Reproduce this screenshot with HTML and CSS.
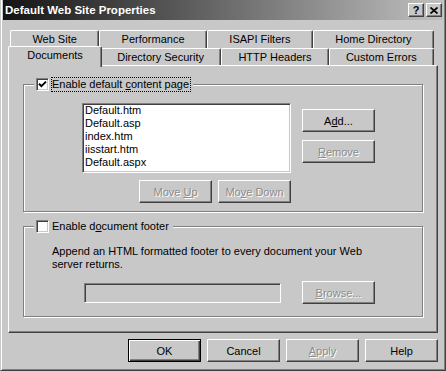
FILE: index.html
```html
<!DOCTYPE html>
<html lang="en">
<head>
  <meta charset="UTF-8">
  <title>Default Web Site Properties</title>
  <link rel="stylesheet" href="styles.css">
</head>
<body>

  <div class="window">
    <div class="titlebar">
      <span class="title">Default Web Site Properties</span>
      <div class="caption-buttons">
        <span class="caption-btn">?</span>
        <span class="caption-btn">
          <svg width="8" height="7" viewBox="0 0 8 7"><path d="M0.5 0.5L7.5 6.5M7.5 0.5L0.5 6.5" stroke="#000" stroke-width="1.7"/></svg>
        </span>
      </div>
    </div>

    <div class="sheet">
      <div class="tabs">
        <div class="tab-row back">
          <div class="tab">Web Site</div>
          <div class="tab">Performance</div>
          <div class="tab">ISAPI Filters</div>
          <div class="tab">Home Directory</div>
        </div>
        <div class="tab-row front">
          <div class="tab selected">Documents</div>
          <div class="tab">Directory Security</div>
          <div class="tab">HTTP Headers</div>
          <div class="tab">Custom Errors</div>
        </div>
      </div>

      <div class="panel">
        <div class="group group-docs">
          <div class="legend">
            <span class="checkbox">
              <svg width="9" height="9" viewBox="0 0 9 9"><path d="M1 3.8l2.4 2.4L8 1.6" fill="none" stroke="#000" stroke-width="2"/></svg>
            </span>
            <span class="label focus">Enable default <u>c</u>ontent page</span>
          </div>

          <div class="doc-row">
            <div class="listbox">
              <div>Default.htm</div>
              <div>Default.asp</div>
              <div>index.htm</div>
              <div>iisstart.htm</div>
              <div>Default.aspx</div>
            </div>
            <div class="side-buttons">
              <button class="btn">A<u>d</u>d...</button>
              <button class="btn" disabled><u>R</u>emove</button>
            </div>
          </div>

          <div class="move-row">
            <button class="btn" disabled>Move <u>U</u>p</button>
            <button class="btn" disabled>Mo<u>v</u>e Down</button>
          </div>
        </div>

        <div class="group group-footer">
          <div class="legend">
            <span class="checkbox"></span>
            <span class="label">Enable d<u>o</u>cument footer</span>
          </div>

          <p class="note">Append an HTML formatted footer to every document your Web server returns.</p>

          <div class="footer-row">
            <div class="textfield"></div>
            <button class="btn" disabled><u>B</u>rowse...</button>
          </div>
        </div>
      </div>

      <div class="dialog-buttons">
        <button class="btn default">OK</button>
        <button class="btn">Cancel</button>
        <button class="btn" disabled><u>A</u>pply</button>
        <button class="btn">Help</button>
      </div>
    </div>
  </div>

</body>
</html>
```

FILE: styles.css
```css
* {
  box-sizing: border-box;
}

body {
  margin: 0;
  background: #c8c8c8;
  font-family: 'Liberation Sans', Arial, sans-serif;
  font-size: 11px;
  color: #000;
}

u {
  text-underline-offset: 1px;
}

.window {
  width: 446px;
  height: 371px;
  background: #c8c8c8;
  border-left: 1px solid #c8c8c8;
  border-right: 1px solid #404040;
  border-bottom: 1px solid #404040;
  box-shadow: inset 1px 0 #fff, inset -1px -1px #808080;
  padding: 0 2px 2px 2px;
}

/* title bar */

.titlebar {
  height: 20px;
  display: flex;
  align-items: center;
  justify-content: space-between;
  padding: 0 1px 0 2px;
  background: linear-gradient(to right, #141414, #c0c0c0);
}

.title {
  color: #fff;
  font-weight: bold;
  font-size: 11.5px;
}

.caption-buttons {
  display: flex;
  gap: 2px;
}

.caption-btn {
  width: 16px;
  height: 14px;
  display: flex;
  align-items: center;
  justify-content: center;
  background: #c8c8c8;
  border: 1px solid;
  border-color: #fff #404040 #404040 #fff;
  box-shadow: inset -1px -1px #808080;
  font-weight: bold;
  font-size: 11px;
  line-height: 12px;
}

/* property sheet */

.sheet {
  padding: 10px 0 0 5px;
}

.tabs {
  width: 424px;
  margin-left: 2px;
}

.tab-row {
  display: flex;
  align-items: flex-start;
}

.tab-row.back {
  height: 18px;
}

.tab-row.front {
  height: 17px;
}

.tab {
  flex: 1 1 auto;
  height: 100%;
  padding: 0 4px;
  text-align: center;
  white-space: nowrap;
  line-height: 17px;
  background: #c8c8c8;
  border-top: 1px solid #fff;
  border-left: 1px solid #fff;
  border-right: 1px solid #404040;
  border-radius: 2px 2px 0 0;
  box-shadow: inset -1px 0 #808080;
}

.tab.selected {
  position: relative;
  z-index: 1;
  height: 21px;
  margin: -2px -2px 0;
  padding: 0 6px;
}

.panel {
  width: 430px;
  height: 268px;
  border: 1px solid;
  border-color: #fff #404040 #404040 #fff;
  box-shadow: inset -1px -1px #808080;
  padding: 18px 0 0 14px;
}

/* group boxes */

.group {
  width: 400px;
  border: 1px solid #808080;
  box-shadow: inset 1px 1px #fff, 1px 1px #fff;
}

.group-docs {
  height: 128px;
}

.group-footer {
  height: 91px;
  margin-top: 14px;
}

.legend {
  display: flex;
  align-items: center;
  gap: 2px;
  width: max-content;
  height: 15px;
  margin: -8px 0 0 10px;
  padding: 0 2px;
  background: #c8c8c8;
}

.checkbox {
  width: 13px;
  height: 13px;
  display: flex;
  align-items: center;
  justify-content: center;
  background: #fff;
  border: 1px solid;
  border-color: #808080 #fff #fff #808080;
  box-shadow: inset 1px 1px #404040, inset -1px -1px #c8c8c8;
}

.label {
  line-height: 13px;
  padding-right: 1px;
  border: 1px solid transparent;
}

.label.focus {
  border: 1px dotted #000;
}

.doc-row {
  display: flex;
  margin-top: 11px;
}

.listbox {
  width: 209px;
  height: 70px;
  margin-left: 58px;
  padding: 0 1px;
  line-height: 13px;
  background: #fff;
  border: 1px solid;
  border-color: #808080 #fff #fff #808080;
  box-shadow: inset 1px 1px #404040, inset -1px -1px #c8c8c8;
  border-width: 1px;
  outline: 0;
}

.listbox div {
  padding-left: 1px;
}

.side-buttons {
  display: flex;
  flex-direction: column;
  gap: 8px;
  margin-left: 11px;
  padding-top: 6px;
}

.move-row {
  display: flex;
  gap: 6px;
  margin: 7px 0 0 115px;
}

.note {
  width: 330px;
  margin: 11px 0 0 28px;
  line-height: 13px;
}

.footer-row {
  display: flex;
  align-items: center;
  margin-top: 10px;
}

.textfield {
  width: 197px;
  height: 20px;
  margin-left: 60px;
  margin-right: 21px;
  background: #c8c8c8;
  border: 1px solid;
  border-color: #808080 #fff #fff #808080;
  box-shadow: inset 1px 1px #404040, inset -1px -1px #c8c8c8;
}

/* push buttons */

.btn {
  width: 73px;
  height: 23px;
  padding: 0;
  font: inherit;
  color: #000;
  background: #c8c8c8;
  border: 1px solid;
  border-color: #fff #404040 #404040 #fff;
  box-shadow: inset -1px -1px #808080;
}

.btn:disabled {
  color: #8c8c8c;
  text-shadow: 1px 1px 0 #fff;
}

.btn.default {
  border-color: #000;
  box-shadow: inset 1px 1px #fff, inset -1px -1px #404040, inset -2px -2px #808080;
}

.dialog-buttons {
  width: 430px;
  display: flex;
  justify-content: flex-end;
  gap: 6px;
  margin-top: 6px;
}
```
